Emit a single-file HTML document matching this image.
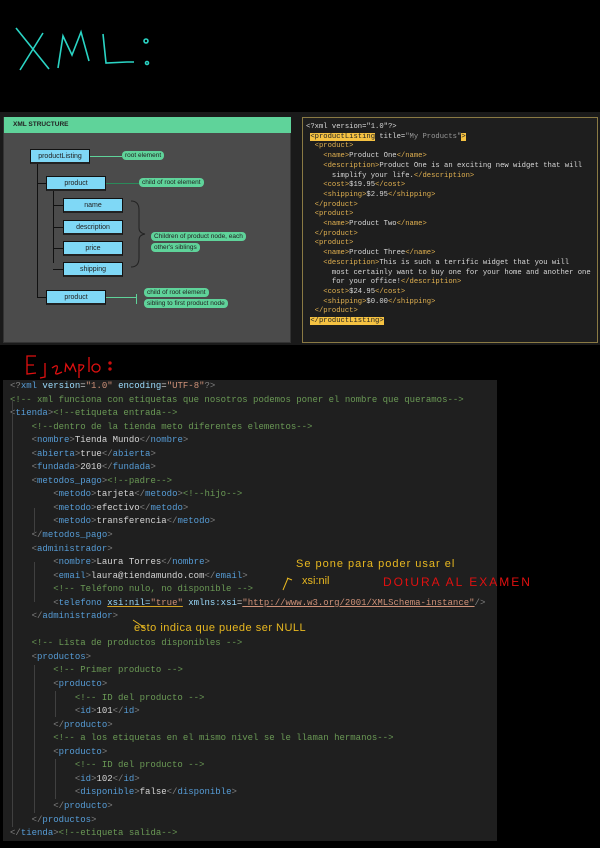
<!DOCTYPE html>
<html><head><meta charset="utf-8"><style>
*{margin:0;padding:0;box-sizing:border-box}
body{width:600px;height:848px;background:#000;position:relative;overflow:hidden;font-family:"Liberation Sans",sans-serif}
.abs{position:absolute}
.box{position:absolute;background:#7fd8f6;border:1px solid #111;border-bottom:2px solid #222;font-size:7px;color:#222;text-align:center;line-height:13px;height:15px}
.pill{position:absolute;background:#5fd39a;border-radius:4px;font-size:6.5px;color:#222;padding:0 3px;line-height:9px;height:9px;white-space:nowrap}
.ln{position:absolute;background:#111}
#xml{position:absolute;left:302px;top:117px;width:296px;height:226px;background:#1e1e1e;border:1px solid #8a7a44;font-family:"Liberation Mono",monospace;font-size:7.2px;line-height:9.7px;color:#d8d8d8;padding:5px 0 0 3px;white-space:pre}
#xml .t{color:#e0b050}
#xml .hl{background:#f5c242;color:#222}
#code{position:absolute;left:3px;top:380px;width:494px;height:461px;background:#1f1f1f;font-family:"Liberation Mono",monospace;font-size:9px;line-height:13.55px;color:#d4d4d4;padding:0 0 0 7px;white-space:pre}
.b{color:#569cd6}.c{color:#6a9955}.s{color:#ce9178}.a{color:#9cdcfe}.g{color:#808080}
.guide{position:absolute;width:1px;background:#404040}
</style></head><body>
<svg class="abs" style="left:0;top:0" width="600" height="848">
<g stroke="#2ad4c4" stroke-width="1.6" fill="none">
<path d="M16 28 L49 69 M43 33 L20 70"/>
<path d="M58 68 L63 36 L72 55 L81 32 L89 61"/>
<path d="M103 34 L106 63 L127 62 L134 62"/>
<circle cx="146" cy="41" r="2"/><circle cx="147" cy="63" r="1.5"/>
</g>
<g stroke="#e01010" stroke-width="1.3" fill="none">
<path d="M36 356 L27 356 L27 374 L36 373 M27 365 L34 365"/>
<path d="M45 363 L45 377 L40 378"/>
<path d="M52 368 Q60 362 56 372 Q54 376 62 372"/>
<path d="M65 372 L66 364 L70 370 L73 364 L76 372"/>
<path d="M79 364 L79 378 M79 365 Q88 364 80 371"/>
<path d="M89 357 L89 372"/>
<circle cx="96" cy="368" r="4"/>
<circle cx="110" cy="363" r="1"/><circle cx="110" cy="369" r="1"/>
</g>
</svg>

<div class="abs" style="left:0;top:112px;width:600px;height:233px;background:#1a1a1a"></div>
<div class="abs" style="left:3px;top:117px;width:288px;height:226px;background:#4b4b4b;border:1px solid #333"></div>
<div class="abs" style="left:4px;top:117px;width:287px;height:16px;background:#5fd39a;font-size:6.5px;font-weight:bold;color:#222;padding:4px 9px">XML STRUCTURE</div>
<div class="ln" style="left:37px;top:163px;width:1px;height:135px"></div>
<div class="ln" style="left:37px;top:183px;width:10px;height:1px"></div>
<div class="ln" style="left:37px;top:297px;width:10px;height:1px"></div>
<div class="ln" style="left:53px;top:191px;width:1px;height:72px"></div>
<div class="ln" style="left:53px;top:205px;width:10px;height:1px"></div>
<div class="ln" style="left:53px;top:227px;width:10px;height:1px"></div>
<div class="ln" style="left:53px;top:248px;width:10px;height:1px"></div>
<div class="ln" style="left:53px;top:269px;width:10px;height:1px"></div>
<div class="abs" style="left:90px;top:156px;width:32px;height:1px;background:#5fd39a"></div>
<div class="abs" style="left:105px;top:183px;width:35px;height:1px;background:#2a8a5a"></div>
<div class="abs" style="left:105px;top:297px;width:32px;height:1px;background:#5fd39a"></div>
<div class="abs" style="left:136px;top:294px;width:1px;height:10px;background:#5fd39a"></div>
<div class="box" style="left:30px;top:149px;width:60px">productListing</div>
<div class="box" style="left:46px;top:176px;width:60px">product</div>
<div class="box" style="left:63px;top:198px;width:60px">name</div>
<div class="box" style="left:63px;top:220px;width:60px">description</div>
<div class="box" style="left:63px;top:241px;width:60px">price</div>
<div class="box" style="left:63px;top:262px;width:60px">shipping</div>
<div class="box" style="left:46px;top:290px;width:60px">product</div>
<svg class="abs" style="left:125px;top:200px" width="30" height="68"><path d="M6 1 Q14 1 14 10 L14 28 Q14 33 20 34 Q14 35 14 40 L14 58 Q14 67 6 67" stroke="#222" fill="none"/></svg>
<div class="pill" style="left:122px;top:151px">root element</div>
<div class="pill" style="left:139px;top:178px">child of root element</div>
<div class="pill" style="left:151px;top:232px">Children of product node, each</div>
<div class="pill" style="left:151px;top:243px">other's siblings</div>
<div class="pill" style="left:144px;top:288px">child of root element</div>
<div class="pill" style="left:144px;top:299px">sibling to first product node</div>

<div id="xml">&lt;?xml version="1.0"?&gt;
 <span class="hl">&lt;productListing</span> title=<span style="color:#999">"My Products"</span><span class="hl">&gt;</span>
  <span class="t">&lt;product&gt;</span>
    <span class="t">&lt;name&gt;</span>Product One<span class="t">&lt;/name&gt;</span>
    <span class="t">&lt;description&gt;</span>Product One is an exciting new widget that will
      simplify your life.<span class="t">&lt;/description&gt;</span>
    <span class="t">&lt;cost&gt;</span>$19.95<span class="t">&lt;/cost&gt;</span>
    <span class="t">&lt;shipping&gt;</span>$2.95<span class="t">&lt;/shipping&gt;</span>
  <span class="t">&lt;/product&gt;</span>
  <span class="t">&lt;product&gt;</span>
    <span class="t">&lt;name&gt;</span>Product Two<span class="t">&lt;/name&gt;</span>
  <span class="t">&lt;/product&gt;</span>
  <span class="t">&lt;product&gt;</span>
    <span class="t">&lt;name&gt;</span>Product Three<span class="t">&lt;/name&gt;</span>
    <span class="t">&lt;description&gt;</span>This is such a terrific widget that you will
      most certainly want to buy one for your home and another one
      for your office!<span class="t">&lt;/description&gt;</span>
    <span class="t">&lt;cost&gt;</span>$24.95<span class="t">&lt;/cost&gt;</span>
    <span class="t">&lt;shipping&gt;</span>$0.00<span class="t">&lt;/shipping&gt;</span>
  <span class="t">&lt;/product&gt;</span>
 <span class="hl">&lt;/productListing&gt;</span></div>

<div id="code"><span class="g">&lt;?</span><span class="b">xml</span> <span class="a">version</span>=<span class="s">"1.0"</span> <span class="a">encoding</span>=<span class="s">"UTF-8"</span><span class="g">?&gt;</span>
<span class="c">&lt;!-- xml funciona con etiquetas que nosotros podemos poner el nombre que queramos--&gt;</span>
<span class="g">&lt;</span><span class="b">tienda</span><span class="g">&gt;</span><span class="c">&lt;!--etiqueta entrada--&gt;</span>
    <span class="c">&lt;!--dentro de la tienda meto diferentes elementos--&gt;</span>
    <span class="g">&lt;</span><span class="b">nombre</span><span class="g">&gt;</span>Tienda Mundo<span class="g">&lt;/</span><span class="b">nombre</span><span class="g">&gt;</span>
    <span class="g">&lt;</span><span class="b">abierta</span><span class="g">&gt;</span>true<span class="g">&lt;/</span><span class="b">abierta</span><span class="g">&gt;</span>
    <span class="g">&lt;</span><span class="b">fundada</span><span class="g">&gt;</span>2010<span class="g">&lt;/</span><span class="b">fundada</span><span class="g">&gt;</span>
    <span class="g">&lt;</span><span class="b">metodos_pago</span><span class="g">&gt;</span><span class="c">&lt;!--padre--&gt;</span>
        <span class="g">&lt;</span><span class="b">metodo</span><span class="g">&gt;</span>tarjeta<span class="g">&lt;/</span><span class="b">metodo</span><span class="g">&gt;</span><span class="c">&lt;!--hijo--&gt;</span>
        <span class="g">&lt;</span><span class="b">metodo</span><span class="g">&gt;</span>efectivo<span class="g">&lt;/</span><span class="b">metodo</span><span class="g">&gt;</span>
        <span class="g">&lt;</span><span class="b">metodo</span><span class="g">&gt;</span>transferencia<span class="g">&lt;/</span><span class="b">metodo</span><span class="g">&gt;</span>
    <span class="g">&lt;/</span><span class="b">metodos_pago</span><span class="g">&gt;</span>
    <span class="g">&lt;</span><span class="b">administrador</span><span class="g">&gt;</span>
        <span class="g">&lt;</span><span class="b">nombre</span><span class="g">&gt;</span>Laura Torres<span class="g">&lt;/</span><span class="b">nombre</span><span class="g">&gt;</span>
        <span class="g">&lt;</span><span class="b">email</span><span class="g">&gt;</span>laura@tiendamundo.com<span class="g">&lt;/</span><span class="b">email</span><span class="g">&gt;</span>
        <span class="c">&lt;!-- Teléfono nulo, no disponible --&gt;</span>
        <span class="g">&lt;</span><span class="b">telefono</span> <span class="a" style="text-decoration:underline #d4a020">xsi:nil=<span class="s">"true"</span></span> <span class="a">xmlns:xsi</span>=<span class="s" style="text-decoration:underline">"http://www.w3.org/2001/XMLSchema-instance"</span><span class="g">/&gt;</span>
    <span class="g">&lt;/</span><span class="b">administrador</span><span class="g">&gt;</span>

    <span class="c">&lt;!-- Lista de productos disponibles --&gt;</span>
    <span class="g">&lt;</span><span class="b">productos</span><span class="g">&gt;</span>
        <span class="c">&lt;!-- Primer producto --&gt;</span>
        <span class="g">&lt;</span><span class="b">producto</span><span class="g">&gt;</span>
            <span class="c">&lt;!-- ID del producto --&gt;</span>
            <span class="g">&lt;</span><span class="b">id</span><span class="g">&gt;</span>101<span class="g">&lt;/</span><span class="b">id</span><span class="g">&gt;</span>
        <span class="g">&lt;/</span><span class="b">producto</span><span class="g">&gt;</span>
        <span class="c">&lt;!-- a los etiquetas en el mismo nivel se le llaman hermanos--&gt;</span>
        <span class="g">&lt;</span><span class="b">producto</span><span class="g">&gt;</span>
            <span class="c">&lt;!-- ID del producto --&gt;</span>
            <span class="g">&lt;</span><span class="b">id</span><span class="g">&gt;</span>102<span class="g">&lt;/</span><span class="b">id</span><span class="g">&gt;</span>
            <span class="g">&lt;</span><span class="b">disponible</span><span class="g">&gt;</span>false<span class="g">&lt;/</span><span class="b">disponible</span><span class="g">&gt;</span>
        <span class="g">&lt;/</span><span class="b">producto</span><span class="g">&gt;</span>
    <span class="g">&lt;/</span><span class="b">productos</span><span class="g">&gt;</span>
<span class="g">&lt;/</span><span class="b">tienda</span><span class="g">&gt;</span><span class="c">&lt;!--etiqueta salida--&gt;</span>
<div class="guide" style="left:9px;top:20px;height:427px"></div>
<div class="guide" style="left:31px;top:128px;height:26px"></div>
<div class="guide" style="left:31px;top:182px;height:40px"></div>
<div class="guide" style="left:31px;top:285px;height:148px"></div>
<div class="guide" style="left:52px;top:311px;height:26px"></div>
<div class="guide" style="left:52px;top:379px;height:40px"></div>
</div>
<svg class="abs" style="left:0;top:0;pointer-events:none" width="600" height="848">
<g fill="#e8b820" font-family="Liberation Sans" font-size="11"><text x="296" y="567" letter-spacing="1">Se pone para poder usar el</text><text x="302" y="584">xsi:nil</text><text x="134" y="631" letter-spacing="0.5">esto indica que puede ser NULL</text></g>
<path d="M283 590 L288 578 M287 578 L292 580" stroke="#e8b820" stroke-width="1" fill="none"/>
<path d="M133 620 L145 628" stroke="#e8b820" stroke-width="1" fill="none"/>
<g fill="#e01010" font-family="Liberation Sans" font-size="12"><text x="383" y="586" letter-spacing="2">DOtURA AL EXAMEN</text></g>
</svg>
</body></html>
